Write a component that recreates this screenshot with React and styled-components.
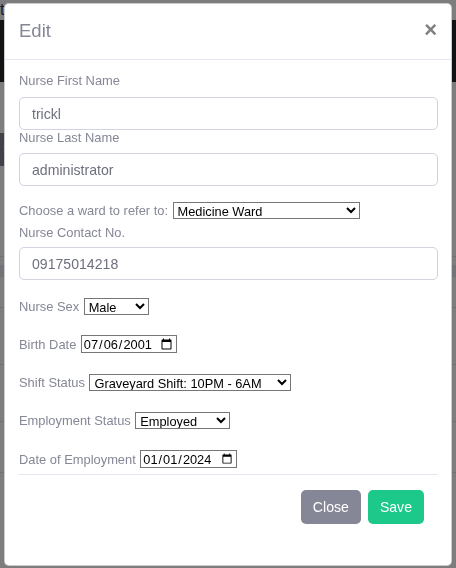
import React from "react";
import styled, { createGlobalStyle } from "styled-components";

const Global = createGlobalStyle`
  html, body { margin: 0; padding: 0; background: #fff; }
  body { font-family: "Liberation Sans", Arial, sans-serif; overflow: hidden; }
  * { box-sizing: border-box; }
`;

const Page = styled.div`
  width: 456px;
  height: 568px;
  background: #fff;
  display: flex;
  flex-direction: column;
`;

const TopStrip = styled.div`
  height: 20px;
  font-size: 16px;
  color: #3a3b45;
  line-height: 20px;
`;

const NavBar = styled.div`
  height: 62px;
  background: #212529;
`;

const PageBody = styled.div`
  display: flex;
  flex-direction: column;
  padding-top: 51px;
`;

const PageButton = styled.div`
  width: 60px;
  height: 33px;
  margin-left: -40px;
  background: #858796;
  color: #fff;
  font-size: 16px;
  line-height: 33px;
  text-align: right;
  padding-right: 12px;
`;

const TableLine = styled.div`
  height: ${(p) => p.$h || 1}px;
  margin-top: ${(p) => p.$mt}px;
  background: ${(p) => p.$c || "#e3e6f0"};
`;

const Backdrop = styled.div`
  position: fixed;
  inset: 0;
  background: rgba(0, 0, 0, 0.51);
`;

const Modal = styled.div`
  position: fixed;
  left: 4px;
  top: 3px;
  width: 448px;
  height: 563px;
  background: #fff;
  border: 1px solid rgba(0, 0, 0, 0.2);
  border-radius: 5px;
  display: flex;
  flex-direction: column;
`;

const Header = styled.div`
  height: 56px;
  padding: 16px 14px 0 14px;
  border-bottom: 1px solid #e3e6f0;
  display: flex;
  justify-content: space-between;
  align-items: flex-start;
`;

const Title = styled.h5`
  margin: 0;
  font-size: 18.5px;
  line-height: 21.6px;
  font-weight: 400;
  color: #858796;
`;

const CloseX = styled.button`
  border: 0;
  background: transparent;
  padding: 0;
  margin: -1px 0 0 0;
  font-family: "Liberation Sans", Arial, sans-serif;
  font-size: 22px;
  font-weight: 700;
  line-height: 22px;
  color: #808080;
  cursor: pointer;
`;

const Body = styled.div`
  padding: 13px 13px 0 14px;
  display: flex;
  flex-direction: column;
`;

const Label = styled.label`
  display: block;
  font-size: 12.9px;
  line-height: 16px;
  color: #858796;
  margin-top: ${(p) => p.$mt || 0}px;
  margin-bottom: ${(p) => p.$mb ?? 7}px;
`;

const TextInput = styled.input`
  display: block;
  width: 100%;
  height: 33px;
  padding: 0 12px;
  font-family: "Liberation Sans", Arial, sans-serif;
  font-size: 14.1px;
  color: #6e707e;
  background: #fff;
  border: 1px solid #d1d3e2;
  border-radius: 5px;
  outline: none;
`;

const InlineRow = styled.div`
  display: flex;
  align-items: center;
  gap: 4.5px;
  height: 18px;
  margin-top: ${(p) => p.$mt || 0}px;
  font-size: 12.9px;
  color: #858796;
`;

const RowsGroup = styled.div`
  display: flex;
  flex-direction: column;
  gap: 20.3px;
  margin-top: 17px;
`;

const Select = styled.select`
  width: ${(p) => p.$w}px;
  height: 17px;
  padding: 0;
  font-family: "Liberation Sans", Arial, sans-serif;
  font-size: 12.8px;
  color: #000;
  background-color: #fff;
  border: 1px solid #767676;
  border-radius: 0;
`;

const DateInput = styled.input`
  width: ${(p) => p.$w}px;
  height: 18px;
  padding: 0 1px;
  font-family: "Liberation Sans", Arial, sans-serif;
  font-size: 12.8px;
  color: #000;
  background: #fff;
  border: 1px solid #767676;
  border-radius: 0;
`;

const Divider = styled.hr`
  margin: 6px 0 0 0;
  border: 0;
  border-top: 1px solid #e3e6f0;
`;

const Footer = styled.div`
  display: flex;
  justify-content: flex-end;
  gap: 7px;
  padding: 15px 14px 0 0;
`;

const Button = styled.button`
  height: 34px;
  padding: 0 12px;
  border: 0;
  border-radius: 5px;
  font-family: "Liberation Sans", Arial, sans-serif;
  font-size: 14.1px;
  color: #fff;
  background: ${(p) => p.$bg};
  cursor: pointer;
`;

export default function App() {
  return (
    <>
      <Global />
      <Page>
        <TopStrip>t</TopStrip>
        <NavBar />
        <PageBody>
          <PageButton>t</PageButton>
          <TableLine $mt={90} />
          <TableLine $mt={8} $h={12} $c="#eaecf4" />
          <TableLine $mt={30} />
          <TableLine $mt={56} />
          <TableLine $mt={56} />
          <TableLine $mt={50} />
        </PageBody>
      </Page>
      <Backdrop />
      <Modal role="dialog">
        <Header>
          <Title>Edit</Title>
          <CloseX aria-label="Close">×</CloseX>
        </Header>
        <Body>
          <Label $mb={8}>Nurse First Name</Label>
          <TextInput defaultValue="trickl" />
          <Label>Nurse Last Name</Label>
          <TextInput defaultValue="administrator" />
          <InlineRow $mt={15}>
            <span>Choose a ward to refer to:</span>
            <Select $w={187} defaultValue="Medicine Ward">
              <option>Medicine Ward</option>
              <option>Surgical Ward</option>
              <option>Pediatric Ward</option>
            </Select>
          </InlineRow>
          <Label $mt={6} $mb={6}>Nurse Contact No.</Label>
          <TextInput defaultValue="09175014218" />
          <RowsGroup>
            <InlineRow>
              <span>Nurse Sex</span>
              <Select $w={65} defaultValue="Male">
                <option>Male</option>
                <option>Female</option>
              </Select>
            </InlineRow>
            <InlineRow>
              <span>Birth Date</span>
              <DateInput type="date" $w={96} defaultValue="2001-07-06" />
            </InlineRow>
            <InlineRow>
              <span>Shift Status</span>
              <Select $w={202} defaultValue="Graveyard Shift: 10PM - 6AM">
                <option>Morning Shift: 6AM - 2PM</option>
                <option>Afternoon Shift: 2PM - 10PM</option>
                <option>Graveyard Shift: 10PM - 6AM</option>
              </Select>
            </InlineRow>
            <InlineRow>
              <span>Employment Status</span>
              <Select $w={95} defaultValue="Employed">
                <option>Employed</option>
                <option>Resigned</option>
              </Select>
            </InlineRow>
            <InlineRow>
              <span>Date of Employment</span>
              <DateInput type="date" $w={97} defaultValue="2024-01-01" />
            </InlineRow>
          </RowsGroup>
          <Divider />
          <Footer>
            <Button $bg="#858796">Close</Button>
            <Button $bg="#1cc88a">Save</Button>
          </Footer>
        </Body>
      </Modal>
    </>
  );
}
